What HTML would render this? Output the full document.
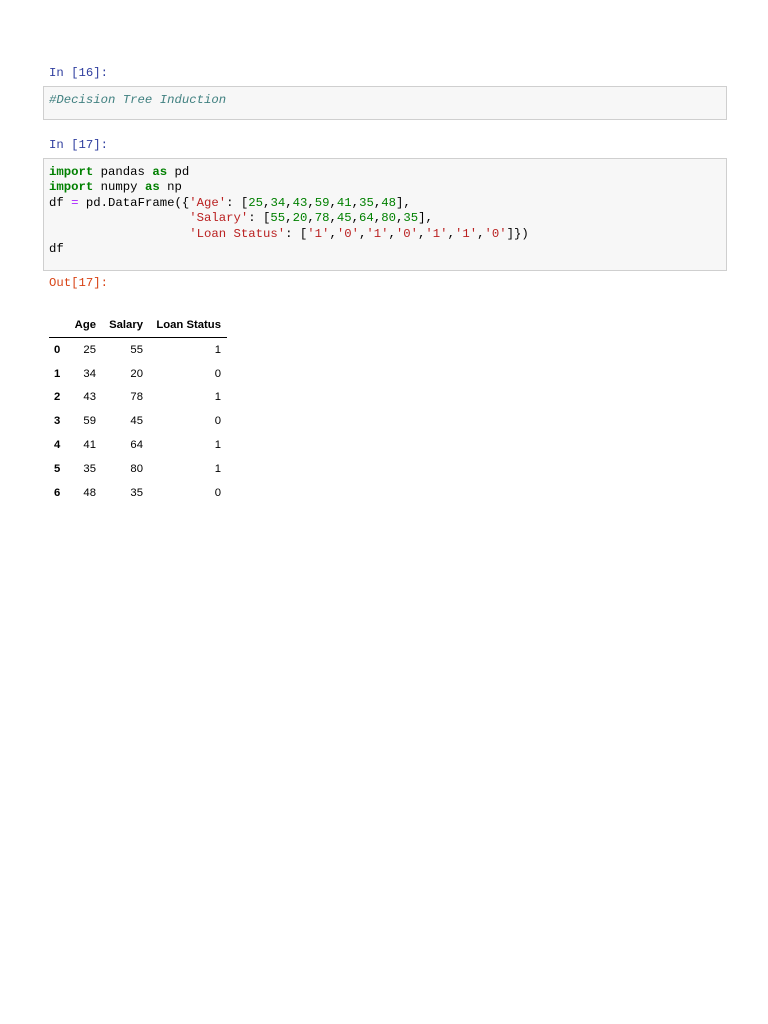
<!DOCTYPE html>
<html><head><style>
body{margin:0;width:768px;height:1024px;background:#fff;position:relative;font-family:"Liberation Mono",monospace;}
.p{position:absolute;left:49px;font-size:12.3px;color:#303f9f;line-height:15px;}
.box{position:absolute;left:43px;width:682px;border:1px solid #cfcfcf;background:#f7f7f7;}
pre{margin:0;font-family:"Liberation Mono",monospace;font-size:12.3px;line-height:15.4px;color:#000;position:absolute;left:5px;}
.k{color:#008000;font-weight:bold}.s{color:#ba2121}.n{color:#008000}.o{color:#aa22ff}.c{color:#408080;font-style:italic}
table{position:absolute;left:49px;top:319px;border-collapse:collapse;font-family:"Liberation Sans",sans-serif;font-size:11.3px;}
th,td{text-align:right;padding:0 6px 0 0;height:23.8px;}
th{font-weight:bold;height:18px;border-bottom:1px solid #000;vertical-align:top}
td:first-child{font-weight:bold;text-align:left;padding-left:5px}
</style></head><body>
<div class="p" style="top:66px">In [16]:</div>
<div class="box" style="top:86px;height:32px"><pre style="top:6px"><span class="c">#Decision Tree Induction</span></pre></div>
<div class="p" style="top:138px">In [17]:</div>
<div class="box" style="top:158px;height:111px"><pre style="top:6px"><span class="k">import</span> pandas <span class="k">as</span> pd
<span class="k">import</span> numpy <span class="k">as</span> np
df <span class="o">=</span> pd.DataFrame({<span class="s">'Age'</span>: [<span class="n">25</span>,<span class="n">34</span>,<span class="n">43</span>,<span class="n">59</span>,<span class="n">41</span>,<span class="n">35</span>,<span class="n">48</span>],
                   <span class="s">'Salary'</span>: [<span class="n">55</span>,<span class="n">20</span>,<span class="n">78</span>,<span class="n">45</span>,<span class="n">64</span>,<span class="n">80</span>,<span class="n">35</span>],
                   <span class="s">'Loan Status'</span>: [<span class="s">'1'</span>,<span class="s">'0'</span>,<span class="s">'1'</span>,<span class="s">'0'</span>,<span class="s">'1'</span>,<span class="s">'1'</span>,<span class="s">'0'</span>]})
df</pre></div>
<div class="p" style="top:276px;color:#d84315">Out[17]:</div>
<table>
<tr><th style="width:14px"></th><th style="width:27px">Age</th><th style="width:41px">Salary</th><th style="width:72px">Loan Status</th></tr>
<tr><td>0</td><td>25</td><td>55</td><td>1</td></tr>
<tr><td>1</td><td>34</td><td>20</td><td>0</td></tr>
<tr><td>2</td><td>43</td><td>78</td><td>1</td></tr>
<tr><td>3</td><td>59</td><td>45</td><td>0</td></tr>
<tr><td>4</td><td>41</td><td>64</td><td>1</td></tr>
<tr><td>5</td><td>35</td><td>80</td><td>1</td></tr>
<tr><td>6</td><td>48</td><td>35</td><td>0</td></tr>
</table>
</body></html>
